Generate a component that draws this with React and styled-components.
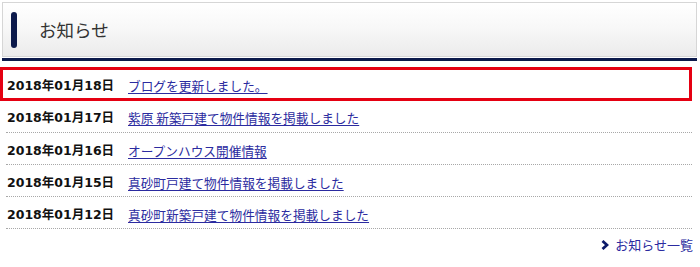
import styled, { createGlobalStyle } from "styled-components";

const GlobalStyle = createGlobalStyle`
  html, body {
    margin: 0;
    padding: 0;
    background: #fff;
  }
  body {
    font-family: "Noto Sans CJK JP", "DejaVu Sans", sans-serif;
    color: #222;
  }
`;

const Section = styled.section`
  width: 700px;
  padding-top: 2px;
`;

const HeadWrap = styled.div`
  margin: 0 3px 0 2px;
  padding-bottom: 1px;
  border-bottom: 3px solid #0c1a4b;
`;

const Head = styled.h2`
  margin: 0;
  height: 53px;
  display: flex;
  align-items: center;
  gap: 22px;
  padding-left: 8px;
  border: 1px solid #d6d6d6;
  background: linear-gradient(#ffffff 0%, #f8f8f8 45%, #ebebeb 100%);
  font-size: 17.5px;
  font-weight: normal;
  color: #333;
`;

const HeadBar = styled.span`
  width: 6px;
  height: 36px;
  border-radius: 3px;
  background: #0c1a4b;
`;

const List = styled.ul`
  list-style: none;
  margin: 7px 8px 0 6px;
  padding: 0;
`;

const Item = styled.li`
  position: relative;
  display: grid;
  grid-template-columns: 121px 1fr;
  align-items: center;
  padding: 10px 0 6.25px 1px;
  line-height: 15px;
  border-bottom: 1px dotted #a8a8a8;

  ${(p) =>
    p.$highlight &&
    `
    &::after {
      content: "";
      position: absolute;
      left: -6px;
      right: 0;
      top: -1px;
      bottom: -2px;
      border: 3px solid #e50012;
      pointer-events: none;
    }
  `}
`;

const Date = styled.span`
  font-family: "DejaVu Sans", "Noto Sans CJK JP", sans-serif;
  font-weight: bold;
  font-size: 12.5px;
  color: #111;
  white-space: nowrap;
`;

const Link = styled.a`
  font-size: 12.7px;
  color: #2b2ba0;
  text-decoration: underline;
  text-underline-offset: 2px;
  white-space: nowrap;
`;

const Footer = styled.div`
  display: flex;
  justify-content: flex-end;
  padding: 8px 7px 0 0;
`;

const MoreLink = styled.a`
  display: inline-flex;
  align-items: center;
  gap: 6px;
  font-size: 13px;
  line-height: 15px;
  color: #2b2ba0;
  text-decoration: none;
`;

const Chevron = () => (
  <svg width="8" height="10" viewBox="0 0 8 10">
    <polyline
      points="1.5,1 6,5 1.5,9"
      fill="none"
      stroke="#0c1a6a"
      strokeWidth="2.8"
      strokeLinejoin="miter"
    />
  </svg>
);

const news = [
  { date: "2018年01月18日", title: "ブログを更新しました。", highlight: true },
  { date: "2018年01月17日", title: "紫原 新築戸建て物件情報を掲載しました" },
  { date: "2018年01月16日", title: "オープンハウス開催情報" },
  { date: "2018年01月15日", title: "真砂町戸建て物件情報を掲載しました" },
  { date: "2018年01月12日", title: "真砂町新築戸建て物件情報を掲載しました" },
];

export default function App() {
  return (
    <>
      <GlobalStyle />
      <Section>
        <HeadWrap>
          <Head>
            <HeadBar />
            お知らせ
          </Head>
        </HeadWrap>
        <List>
          {news.map((n) => (
            <Item key={n.date} $highlight={n.highlight}>
              <Date>{n.date}</Date>
              <Link href="#">{n.title}</Link>
            </Item>
          ))}
        </List>
        <Footer>
          <MoreLink href="#">
            <Chevron />
            お知らせ一覧
          </MoreLink>
        </Footer>
      </Section>
    </>
  );
}
